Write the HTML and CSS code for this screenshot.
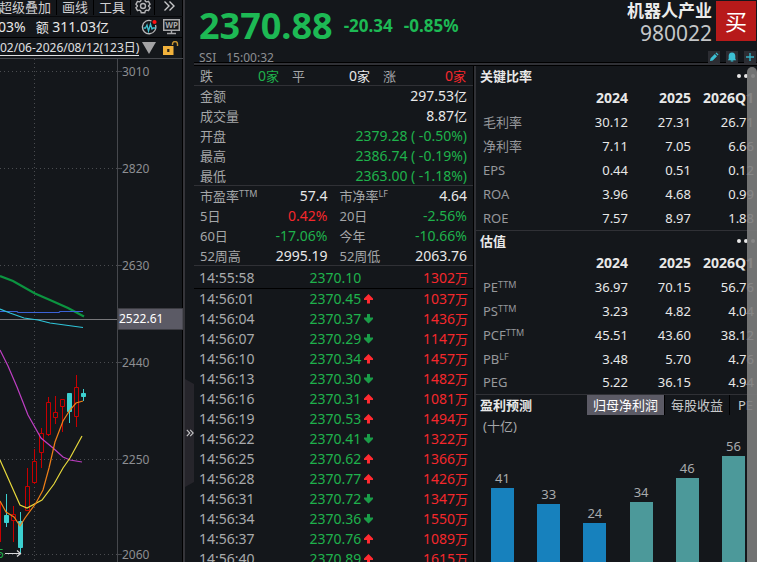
FILE: index.html
```html
<!DOCTYPE html>
<html lang="zh-CN">
<head>
<meta charset="utf-8">
<title>机器人产业 980022</title>
<link rel="stylesheet" href="styles.css">
</head>
<body>
<div class="app">
  <section class="kline">
    <nav class="toolbar">
      <button class="tool">超级叠加</button>
      <button class="tool">画线</button>
      <button class="tool">工具</button>
      <button class="tool icon-tool" aria-label="设置">
        <svg width="16" height="16" viewBox="0 0 16 16" fill="none" stroke="#b4b4b6" stroke-width="1.4" stroke-linejoin="round"><path d="M6.2 1.2h3.6l.5 2 1.2.7 2-.6 1.6 3-1.5 1.4v.6l1.5 1.4-1.6 3-2-.6-1.2.7-.5 2H6.2l-.5-2-1.2-.7-2 .6-1.6-3 1.5-1.4v-.6L.9 6.300l1.600-3 2 .6 1.200-.7z"/><circle cx="8" cy="8" r="2.500"/></svg>
      </button>
      <button class="tool icon-tool last" aria-label="更多">
        <svg width="12" height="12" viewBox="0 0 12 12" fill="none" stroke="#c8c8ca" stroke-width="1.4"><path d="M1.500 1.500 6 6 1.500 10.500M6.500 1.500 11 6l-4.500 4.500"/></svg>
      </button>
    </nav>
    <div class="stats">
      <span>03%</span>
      <span class="amount"><span class="cjk">额</span> 311.03<span class="cjk">亿</span></span>
      <span class="stat-icons">
        <svg width="17" height="17" viewBox="0 0 17 17" fill="none"><path d="M10.500 1.800A6.700 6.700 0 1 0 14.500 6" stroke="#b8b8ba" stroke-width="1.300"/><path d="M2.500 9h2l1.500-3 1.500 6 2-7 1.500 5 1-1h2.500" stroke="#3fc0d0" stroke-width="1.300"/><circle cx="13.500" cy="3" r="2.100" fill="#ff1010"/></svg>
        <svg width="17" height="16" viewBox="0 0 17 16" fill="none" stroke="#a8a8aa"><rect x=".75" y=".75" width="15.500" height="10.500" stroke-width="1.500"/><path d="M8.500 11.500v2.500M4 14.500h9" stroke-width="1.400"/><text x="8.500" y="9" font-size="8" font-weight="700" fill="#a8a8aa" stroke="none" text-anchor="middle">WP</text></svg>
      </span>
    </div>
    <div class="range">
      <a href="#range">02/06-2026/08/12(123日)</a>
      <svg width="14" height="12" viewBox="0 0 14 12"><path d="M0 0h14L7 12z" fill="#a3a3a5"/></svg>
      <svg class="lock" width="16" height="14" viewBox="0 0 16 14"><path d="M0 5h10.500v9H0z" fill="#f2b23c"/><path d="M4.200 8h2.200v3H4.200z" fill="#2a2418"/><path d="M9.500 4V3a2.400 2.400 0 0 1 5 0v2" fill="none" stroke="#c89430" stroke-width="1.400"/></svg>
    </div>
    <svg class="chart" viewBox="0 59 183 503" preserveAspectRatio="xMinYMin slice" role="img" aria-label="日K线">
      <g stroke="#4a4c50" stroke-width="1" stroke-dasharray="1 3">
        <path d="M0 71.500h117M0 168.500h117M0 265.500h117M0 362.500h117M0 459.500h117M0 554.500h117M34.500 59v503"/>
      </g>
      <path d="M117.500 59v503M118 71.500h4M118 168.500h4M118 265.500h4M118 362.500h4M118 459.500h4M118 554.500h4" stroke="#46484d"/>
      <g class="axis">
        <text x="122" y="76">3010</text>
        <text x="122" y="173">2820</text>
        <text x="122" y="270">2630</text>
        <text x="122" y="367">2440</text>
        <text x="122" y="464">2250</text>
        <text x="122" y="559">2060</text>
      </g>
      <g stroke="#c80000" fill="#14171b">
        <path d="M.5 502v40M13.500 506v36M27.500 468v18M34.500 449v35M41.500 428v40M48.500 397v39M55.500 396v28M62.500 399v33M76.500 375v52"/>
        <path d="M11.500 514.500h4v6h-4zM25.500 486.500h4v24h-4zM32.500 461.500h4v21h-4zM39.500 433.500h4v19h-4zM46.500 402.500h4v32h-4zM53.500 412.500h4v5h-4zM60.500 399.500h4v7h-4zM74.500 387.500h4v29h-4z"/>
      </g>
      <g stroke="#3cd0d0" fill="#3cd0d0">
        <path d="M6.500 494v33M20.500 512v41M69.500 393v30M83.500 389v12"/>
        <path d="M4.500 515.500h4v7h-4zM18.500 521.500h4v26h-4zM67.500 393.500h4v18h-4zM81.500 393.500h4v3h-4z"/>
      </g>
      <path d="M0 319.500h117" stroke="#77777a"/>
      <g fill="none" stroke-width="1.200">
        <path d="M0 276l13 5 22 12.500 15 6.500 18 8 16 8.500" stroke="#0c9440" stroke-width="2.200"/>
        <path d="M0 311.500h17l1 1h41l1-1h23" stroke="#3b62d6"/>
        <path d="M0 309l10 4 14 5 14 2 12 3 33 4.500" stroke="#2fc4d8"/>
        <path d="M0 350l8 16 9 21 11 28 13 23 12 10 10 9 7 3 12 2" stroke="#bf3fc4"/>
        <path d="M0 460l8 18 12 27 7 3 15-8 12-16 9-16 7-10 12-22" stroke="#e6d83c"/>
        <path d="M0 501l6 11 8 5 6 9 5-8 11-15 7-13 6-22 6-26 8-21 7-11 6-7 7-2" stroke="#f08018"/>
        <path d="M5 553.500h15M17 550.500l3.500 3-3.500 3" stroke="#d8d8da"/>
      </g>
      <text class="low" x="-3" y="558">5</text>
      <path d="M118 308.500h65v21h-65z" fill="#5b5a65" stroke="#3c3c42"/>
      <text class="cursor" x="119" y="323">2522.61</text>
    </svg>
  </section>

  <aside class="gutter">
    <button class="collapse" aria-label="收起">
      <svg width="8" height="8" viewBox="0 0 8 8" fill="none" stroke="#c4c4c6" stroke-width="1.100"><path d="M.8.8 3.800 4 .8 7.200M4.200.8 7.200 4 4.200 7.200"/></svg>
    </button>
  </aside>

  <main class="quote">
    <header class="head">
      <div class="price-block">
        <div class="price-line">
          <strong class="price">2370.88</strong>
          <strong class="change">-20.34</strong>
          <strong class="change">-0.85%</strong>
        </div>
        <div class="session"><span>SSI</span><span>15:00:32</span></div>
      </div>
      <div class="ident-block">
        <div class="ident-line">
          <div class="ident">
            <h1>机器人产业</h1>
            <span class="code">980022</span>
          </div>
          <button class="buy">买</button>
        </div>
        <div class="actions">
          <button aria-label="编辑"><svg width="12" height="12" viewBox="0 0 12 12" fill="#3cc0d4"><path d="M2 10l.6-2.800L6.800 3 9 5.200 4.800 9.400zM7.500 2.300l.9-.8 2.100 2.100-.8.900z"/></svg></button>
          <button aria-label="提醒"><svg width="12" height="12" viewBox="0 0 12 12" fill="#3cc0d4"><path d="M6 1.500c2.300 0 3.300 1.600 3.300 3.500v3l1 1.200H1.700l1-1.200V5c0-1.900 1-3.500 3.300-3.500zM4.700 9.500h2.600v1H4.700z"/></svg></button>
          <button aria-label="添加"><svg width="12" height="12" viewBox="0 0 12 12" stroke="#35b0c4" stroke-width="1.400"><path d="M6 2v8M2 6h8"/></svg></button>
        </div>
      </div>
    </header>

    <div class="columns">
      <section class="detail">
        <div class="breadth">
          <div><span>跌</span><b class="down">0<i>家</i></b></div>
          <div><span>平</span><b>0<i>家</i></b></div>
          <div><span>涨</span><b class="up">0<i>家</i></b></div>
        </div>
        <dl class="facts">
          <div><dt>金额</dt><dd>297.53<i>亿</i></dd></div>
          <div><dt>成交量</dt><dd>8.87<i>亿</i></dd></div>
          <div><dt>开盘</dt><dd class="down">2379.28 ( -0.50%)</dd></div>
          <div><dt>最高</dt><dd class="down">2386.74 ( -0.19%)</dd></div>
          <div><dt>最低</dt><dd class="down">2363.00 ( -1.18%)</dd></div>
        </dl>
        <dl class="facts pairs">
          <div><dt>市盈率<sup>TTM</sup></dt><dd>57.4</dd></div>
          <div><dt>市净率<sup>LF</sup></dt><dd>4.64</dd></div>
          <div><dt>5日</dt><dd class="up">0.42%</dd></div>
          <div><dt>20日</dt><dd class="down">-2.56%</dd></div>
          <div><dt>60日</dt><dd class="down">-17.06%</dd></div>
          <div><dt>今年</dt><dd class="down">-10.66%</dd></div>
          <div><dt>52周高</dt><dd>2995.19</dd></div>
          <div><dt>52周低</dt><dd>2063.76</dd></div>
        </dl>
        <svg class="defs" aria-hidden="true"><defs>
          <path id="up" d="M4.500 0 9 4.500V6H6v3.500H3V6H0V4.500z"/>
          <path id="dn" d="M4.500 9.500 9 5V3.500H6V0H3v3.500H0V5z"/>
        </defs></svg>
        <table class="ticks">
          <tbody>
            <tr class="first"><td>14:55:58</td><td>2370.10</td><td></td><td>1302<i>万</i></td></tr>
            <tr><td>14:56:01</td><td>2370.45</td><td><svg class="arrow up"><use href="#up"/></svg></td><td>1037<i>万</i></td></tr>
            <tr><td>14:56:04</td><td>2370.37</td><td><svg class="arrow down"><use href="#dn"/></svg></td><td>1436<i>万</i></td></tr>
            <tr><td>14:56:07</td><td>2370.29</td><td><svg class="arrow down"><use href="#dn"/></svg></td><td>1147<i>万</i></td></tr>
            <tr><td>14:56:10</td><td>2370.34</td><td><svg class="arrow up"><use href="#up"/></svg></td><td>1457<i>万</i></td></tr>
            <tr><td>14:56:13</td><td>2370.30</td><td><svg class="arrow down"><use href="#dn"/></svg></td><td>1482<i>万</i></td></tr>
            <tr><td>14:56:16</td><td>2370.31</td><td><svg class="arrow up"><use href="#up"/></svg></td><td>1081<i>万</i></td></tr>
            <tr><td>14:56:19</td><td>2370.53</td><td><svg class="arrow up"><use href="#up"/></svg></td><td>1494<i>万</i></td></tr>
            <tr><td>14:56:22</td><td>2370.41</td><td><svg class="arrow down"><use href="#dn"/></svg></td><td>1322<i>万</i></td></tr>
            <tr><td>14:56:25</td><td>2370.62</td><td><svg class="arrow up"><use href="#up"/></svg></td><td>1366<i>万</i></td></tr>
            <tr><td>14:56:28</td><td>2370.77</td><td><svg class="arrow up"><use href="#up"/></svg></td><td>1426<i>万</i></td></tr>
            <tr><td>14:56:31</td><td>2370.72</td><td><svg class="arrow down"><use href="#dn"/></svg></td><td>1347<i>万</i></td></tr>
            <tr><td>14:56:34</td><td>2370.36</td><td><svg class="arrow down"><use href="#dn"/></svg></td><td>1550<i>万</i></td></tr>
            <tr><td>14:56:37</td><td>2370.76</td><td><svg class="arrow up"><use href="#up"/></svg></td><td>1089<i>万</i></td></tr>
            <tr><td>14:56:40</td><td>2370.89</td><td><svg class="arrow up"><use href="#up"/></svg></td><td>1615<i>万</i></td></tr>
          </tbody>
        </table>
      </section>

      <section class="fundamentals">
        <div class="title"><h2>关键比率</h2><button class="more" aria-label="更多"><span></span><span></span><span></span></button></div>
        <table class="ratios">
          <thead><tr><th></th><th>2024</th><th>2025</th><th>2026Q1</th></tr></thead>
          <tbody>
            <tr><td>毛利率</td><td>30.12</td><td>27.31</td><td>26.71</td></tr>
            <tr><td>净利率</td><td>7.11</td><td>7.05</td><td>6.66</td></tr>
            <tr><td>EPS</td><td>0.44</td><td>0.51</td><td>0.12</td></tr>
            <tr><td>ROA</td><td>3.96</td><td>4.68</td><td>0.99</td></tr>
            <tr><td>ROE</td><td>7.57</td><td>8.97</td><td>1.88</td></tr>
          </tbody>
        </table>
        <div class="title"><h2>估值</h2><button class="more" aria-label="更多"><span></span><span></span><span></span></button></div>
        <table class="ratios">
          <thead><tr><th></th><th>2024</th><th>2025</th><th>2026Q1</th></tr></thead>
          <tbody>
            <tr><td>PE<sup>TTM</sup></td><td>36.97</td><td>70.15</td><td>56.76</td></tr>
            <tr><td>PS<sup>TTM</sup></td><td>3.23</td><td>4.82</td><td>4.04</td></tr>
            <tr><td>PCF<sup>TTM</sup></td><td>45.51</td><td>43.60</td><td>38.12</td></tr>
            <tr><td>PB<sup>LF</sup></td><td>3.48</td><td>5.70</td><td>4.76</td></tr>
            <tr><td>PEG</td><td>5.22</td><td>36.15</td><td>4.94</td></tr>
          </tbody>
        </table>
        <div class="title forecast">
          <h2>盈利预测</h2>
          <div class="tabs">
            <button class="active">归母净利润</button>
            <button>每股收益</button>
            <button>PE</button>
          </div>
        </div>
        <p class="unit">(十亿)</p>
        <div class="bars">
          <div class="bar"><span>41</span><div style="height:85px"></div></div>
          <div class="bar"><span>33</span><div style="height:69px"></div></div>
          <div class="bar"><span>24</span><div style="height:50px"></div></div>
          <div class="bar est"><span>34</span><div style="height:71px"></div></div>
          <div class="bar est"><span>46</span><div style="height:95px"></div></div>
          <div class="bar est"><span>56</span><div style="height:117px"></div></div>
        </div>
        <div class="scrollbar"></div>
      </section>
    </div>
  </main>
</div>
</body>
</html>
```
FILE: styles.css
```css
* { box-sizing: border-box; }

body {
  margin: 0;
  background: #14171b;
  color: #e8e8e8;
  font: 14px/20px "Noto Sans", "Noto Sans CJK SC", sans-serif;
}

button {
  margin: 0;
  padding: 0;
  border: 0;
  background: none;
  color: inherit;
  font: inherit;
}

h1, h2, p, dl, dd { margin: 0; }
i, .cjk { font-style: normal; font-size: 13px; }
svg { display: block; flex: none; }
sup { font-size: 9px; line-height: 0; vertical-align: 4px; }
.up { color: #f5272c; fill: #ff2a30; }
.down { color: #1fb24c; fill: #1a9c48; }

.app {
  display: grid;
  grid-template-columns: 185fr 9px 563fr;
  grid-template-rows: minmax(0, 1fr);
  height: 100vh;
  overflow: hidden;
}

/* K-line pane */
.kline {
  display: flex;
  flex-direction: column;
  min-width: 0;
  overflow: hidden;
  border-right: 2px solid #35353a;
  box-shadow: inset -1px 0 #000;
}

.toolbar {
  display: flex;
  height: 17px;
  border-bottom: 1px solid #08090b;
  color: #d0d0d2;
  font-size: 13px;
  line-height: 15px;
}
.tool {
  display: flex;
  justify-content: center;
  padding: 0 5px;
  flex: none;
  height: 15px;
  border-right: 1px solid #000;
  white-space: nowrap;
}
.tool:first-child { margin-left: -6px; }
.icon-tool { width: 24px; padding: 0; }
.icon-tool svg { margin-top: -2px; }
.icon-tool.last { flex: 1; border: 0; }
.icon-tool.last svg { margin-top: 0; }

.stats {
  display: flex;
  align-items: center;
  height: 21px;
  margin-left: -2px;
  padding-right: 3px;
  border-bottom: 1px solid #000;
  white-space: nowrap;
}
.amount { margin-left: 10px; }
.stat-icons { display: flex; gap: 5px; margin-left: auto; }
.stat-icons text { font-family: "Noto Sans", sans-serif; }

.range {
  display: flex;
  align-items: center;
  gap: 3px;
  height: 21px;
  border-bottom: 1px solid #46484d;
  font-size: 12px;
  line-height: 15px;
  white-space: nowrap;
}
.range a { color: #e0e0e2; text-decoration: none; border-bottom: 1px solid #e0e0e2; }
.lock { margin-left: 4px; }

.chart { flex: 1; width: 100%; min-height: 0; }
.chart text { font-family: "Noto Sans", sans-serif; font-size: 12px; }
.axis { fill: #8c8e92; }
.chart .cursor { fill: #fff; }
.chart .low { fill: #1fb24c; }

.gutter { padding-top: 379px; }
.collapse {
  display: flex;
  align-items: center;
  justify-content: center;
  width: 100%;
  height: 108px;
  background: #26252b;
  clip-path: polygon(0 0, 100% 5px, 100% 103px, 0 100%);
}

/* Quote header */
.quote { display: flex; flex-direction: column; min-width: 0; }
.head {
  display: flex;
  flex: none;
  justify-content: space-between;
  height: 66px;
  border-bottom: 1px solid #000;
  box-shadow: inset 0 -2px #303136, inset 0 -3px #000;
}
.price-block { padding-left: 5px; }
.price-line { display: flex; align-items: center; gap: 11px; height: 51px; color: #1db954; }
.price { font-size: 36px; line-height: 51px; }
.change { font-size: 17px; }
.session { display: flex; gap: 10px; color: #8c8e92; font-size: 12px; line-height: 14px; }
.ident-block { padding: 1px 1px 0 0; }
.ident-line { display: flex; gap: 4px; height: 44px; }
.ident { text-align: right; }
.ident h1 { color: #ececec; font-size: 17px; line-height: 20px; }
.code { display: block; color: #c4c6c8; font-size: 21px; line-height: 24px; }
.buy { width: 40px; height: 40px; background: #b71a1a; color: #fff; font-size: 22px; }
.actions { display: flex; justify-content: flex-end; gap: 6px; margin-top: 6px; }
.actions button { background: #2c2d33; }

.columns { display: grid; grid-template-columns: 280fr 283fr; grid-template-rows: minmax(0, 1fr); flex: 1; min-height: 0; }

/* Index detail */
.detail { min-width: 0; overflow: hidden; border-right: 1px solid #000; }
.detail b { font-weight: 400; }
.breadth {
  display: grid;
  grid-template-columns: 79fr 78fr 83fr;
  gap: 13px;
  height: 20px;
  padding: 0 7px 0 6px;
  border-bottom: 1px solid #303136;
}
.breadth div { display: flex; justify-content: space-between; }
.breadth span, .facts dt { color: #a4a6a8; font-size: 13px; }
.facts { padding: 0 6px; border-bottom: 1px solid #303136; line-height: 20px; height: 100px; }
.facts div { display: flex; justify-content: space-between; height: 20px; }
.facts dt, .facts dd { white-space: nowrap; }
.pairs { display: grid; grid-template-columns: 1fr 1fr; column-gap: 12px; height: 80px; }

.defs { width: 0; height: 0; }
.ticks { width: 100%; border-collapse: collapse; table-layout: fixed; }
.ticks td { height: 20px; padding: 0; text-align: right; color: #f5272c; }
.ticks td:nth-child(1) { width: 30%; padding-left: 5px; text-align: left; color: #a8aaac; }
.ticks td:nth-child(2) { width: 30%; color: #1fb24c; }
.ticks td:nth-child(3) { width: 14px; padding-left: 3px; }
.ticks td:nth-child(4) { padding-right: 5px; }
.ticks .first td { height: 22px; padding-top: 2px; border-bottom: 1px solid #000; }
.arrow { width: 9px; height: 10px; }

/* Fundamentals */
.fundamentals {
  position: relative;
  min-width: 0;
  overflow: hidden;
  border-left: 2px solid #303136;
  font-size: 13px;
}
.title { display: flex; align-items: center; justify-content: space-between; height: 20px; padding: 0 2px 0 4px; }
.title h2 { font-size: 13px; line-height: 20px; }
.more { display: flex; gap: 3px; }
.more span { width: 4px; height: 4px; border-radius: 50%; background: #e8e8e8; }

.ratios { width: 100%; border-collapse: collapse; table-layout: fixed; border-bottom: 1px solid #303136; }
.ratios th, .ratios td { width: 63px; height: 24px; padding: 0; text-align: right; }
.ratios th { font-size: 14px; }
.ratios th:first-child, .ratios td:first-child { width: auto; padding-left: 7px; text-align: left; color: #96989b; }
.ratios th:last-child, .ratios td:last-child { width: 66px; padding-right: 3px; }

.forecast { padding-right: 0; }
.tabs { display: flex; }
.tabs button { padding: 0 6px; height: 20px; border-right: 1px solid #000; color: #c8cacc; }
.tabs .active { background: #5b5a65; color: #fff; }
.tabs button:last-child { padding: 0 4px 0 8px; border: 0; }
.unit { padding: 1px 0 0 7px; color: #a4a6a8; }
.bars { display: flex; align-items: flex-end; justify-content: space-between; height: 137px; padding: 0 12px 0 15px; }
.bar { width: 23px; color: #a8aaac; text-align: center; }
.bar span { display: block; }
.bar div { background: #1781bd; }
.est div { background: #4c999a; }

.scrollbar {
  position: absolute;
  top: 1px;
  right: 0;
  bottom: 0;
  width: 10px;
  border-radius: 5px 5px 0 0;
  background: #7c7c7ce8;
}
```
